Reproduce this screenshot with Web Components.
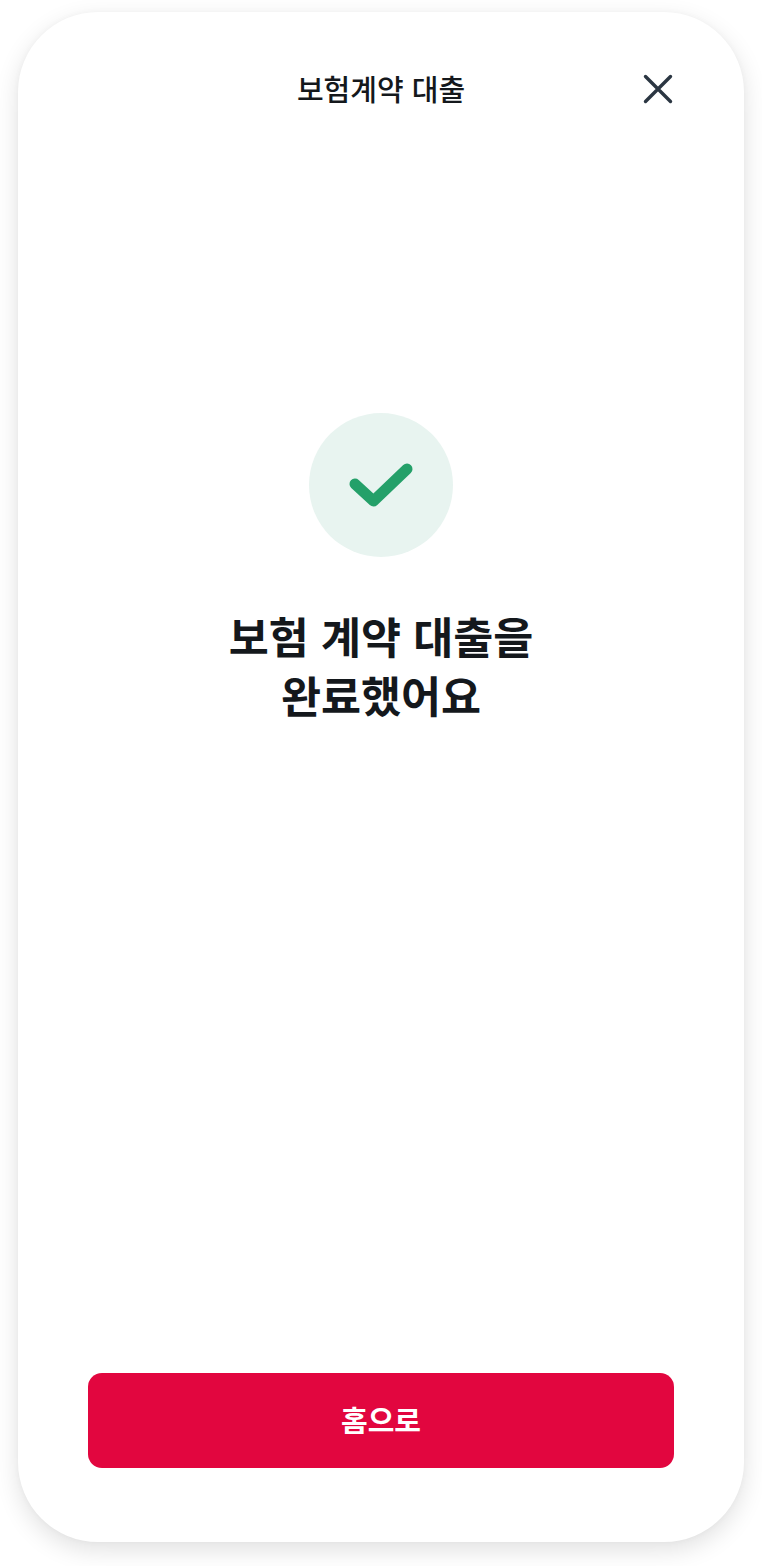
<!DOCTYPE html>
<html lang="ko"><head><meta charset="utf-8"><style>
html,body{margin:0;padding:0;background:#fff}
body{width:762px;height:1566px;overflow:hidden;font-family:"Noto Sans CJK KR","Noto Sans",sans-serif}
</style></head><body>
<phone-frame>
<app-header slot="header" title-text="보험계약 대출"></app-header>
<status-badge></status-badge>
<result-title>보험 계약 대출을<br>완료했어요</result-title>
<primary-button slot="footer">홈으로</primary-button>
</phone-frame>
<script>
const def=(n,html)=>customElements.define(n,class extends HTMLElement{constructor(){super();this.attachShadow({mode:'open'}).innerHTML=html;}});
def('phone-frame',`<style>
:host{box-sizing:border-box;width:726px;height:1530px;margin:12px 0 0 18px;background:#fff;border-radius:80px;
box-shadow:0 8px 24px rgba(0,0,0,.12),0 0 6px rgba(0,0,0,.03);display:flex;flex-direction:column}
main{flex:1;display:flex;flex-direction:column;align-items:center;padding-top:281px}
footer{padding:0 70px 74px 70px}
</style><slot name="header"></slot><main><slot></slot></main><footer><slot name="footer"></slot></footer>`);
customElements.define('app-header',class extends HTMLElement{constructor(){super();this.attachShadow({mode:'open'}).innerHTML=`<style>
:host{display:grid;grid-template-columns:1fr auto 1fr;align-items:center;height:120px;padding:34px 70px 0 0;box-sizing:border-box;color:#14181c}
h1{grid-column:2;margin:0 0 2px;font-size:29px;font-weight:500;line-height:40px;position:relative;left:35px;white-space:nowrap}
svg{grid-column:3;justify-self:end;display:block;width:32px;height:32px}
</style><h1></h1><svg viewBox="0 0 32 32" fill="none" stroke="#2b3642" stroke-width="3.4" stroke-linecap="round"><path d="M3.500 3.500 28.500 28.500M28.500 3.500 3.500 28.500"/></svg>`;}
connectedCallback(){this.shadowRoot.querySelector('h1').textContent=this.getAttribute('title-text');}});
def('status-badge',`<style>
:host{display:flex;align-items:center;justify-content:center;width:144px;height:144px;border-radius:50%;background:#e8f4f0}
svg{display:block;width:144px;height:144px}
</style><svg viewBox="0 0 144 144" fill="none"><path d="M46 71 64.500 88 98 56" stroke="#24a069" stroke-width="11" stroke-linecap="round" stroke-linejoin="round"/></svg>`);
def('result-title',`<style>
:host{display:block;margin-top:49px;text-align:center;font-size:43.500px;font-weight:700;line-height:59px;color:#14181c}
</style><slot></slot>`);
def('primary-button',`<style>
:host{display:flex;align-items:center;justify-content:center;box-sizing:border-box;height:95px;padding-bottom:3px;border-radius:14px;background:#e2063f;color:#fff;font-size:29px;font-weight:700}
</style><slot></slot>`);
</script>
</body></html>
